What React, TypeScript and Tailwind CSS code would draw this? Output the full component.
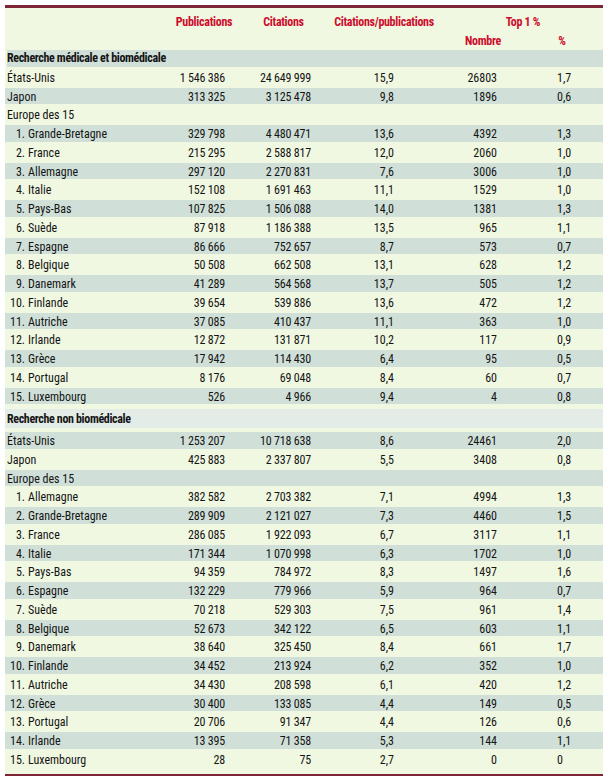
type Row = {
  label: string;
  rank?: number;
  pubs?: string;
  cits?: string;
  ratio?: string;
  count?: string;
  pct?: string;
};

const FONT = "font-['Roboto_Condensed','Open_Sans','DejaVu_Sans_Condensed',sans-serif] font-stretch-[75%]";
const COLS = 'grid grid-cols-[170px_58px_101px_100px_98px_60px]';

const MEDICAL: Row[] = [
  { label: 'États-Unis', pubs: '1 546 386', cits: '24 649 999', ratio: '15,9', count: '26803', pct: '1,7' },
  { label: 'Japon', pubs: '313 325', cits: '3 125 478', ratio: '9,8', count: '1896', pct: '0,6' },
  { label: 'Europe des 15' },
  { rank: 1, label: 'Grande-Bretagne', pubs: '329 798', cits: '4 480 471', ratio: '13,6', count: '4392', pct: '1,3' },
  { rank: 2, label: 'France', pubs: '215 295', cits: '2 588 817', ratio: '12,0', count: '2060', pct: '1,0' },
  { rank: 3, label: 'Allemagne', pubs: '297 120', cits: '2 270 831', ratio: '7,6', count: '3006', pct: '1,0' },
  { rank: 4, label: 'Italie', pubs: '152 108', cits: '1 691 463', ratio: '11,1', count: '1529', pct: '1,0' },
  { rank: 5, label: 'Pays-Bas', pubs: '107 825', cits: '1 506 088', ratio: '14,0', count: '1381', pct: '1,3' },
  { rank: 6, label: 'Suède', pubs: '87 918', cits: '1 186 388', ratio: '13,5', count: '965', pct: '1,1' },
  { rank: 7, label: 'Espagne', pubs: '86 666', cits: '752 657', ratio: '8,7', count: '573', pct: '0,7' },
  { rank: 8, label: 'Belgique', pubs: '50 508', cits: '662 508', ratio: '13,1', count: '628', pct: '1,2' },
  { rank: 9, label: 'Danemark', pubs: '41 289', cits: '564 568', ratio: '13,7', count: '505', pct: '1,2' },
  { rank: 10, label: 'Finlande', pubs: '39 654', cits: '539 886', ratio: '13,6', count: '472', pct: '1,2' },
  { rank: 11, label: 'Autriche', pubs: '37 085', cits: '410 437', ratio: '11,1', count: '363', pct: '1,0' },
  { rank: 12, label: 'Irlande', pubs: '12 872', cits: '131 871', ratio: '10,2', count: '117', pct: '0,9' },
  { rank: 13, label: 'Grèce', pubs: '17 942', cits: '114 430', ratio: '6,4', count: '95', pct: '0,5' },
  { rank: 14, label: 'Portugal', pubs: '8 176', cits: '69 048', ratio: '8,4', count: '60', pct: '0,7' },
  { rank: 15, label: 'Luxembourg', pubs: '526', cits: '4 966', ratio: '9,4', count: '4', pct: '0,8' },
];

const OTHER: Row[] = [
  { label: 'États-Unis', pubs: '1 253 207', cits: '10 718 638', ratio: '8,6', count: '24461', pct: '2,0' },
  { label: 'Japon', pubs: '425 883', cits: '2 337 807', ratio: '5,5', count: '3408', pct: '0,8' },
  { label: 'Europe des 15' },
  { rank: 1, label: 'Allemagne', pubs: '382 582', cits: '2 703 382', ratio: '7,1', count: '4994', pct: '1,3' },
  { rank: 2, label: 'Grande-Bretagne', pubs: '289 909', cits: '2 121 027', ratio: '7,3', count: '4460', pct: '1,5' },
  { rank: 3, label: 'France', pubs: '286 085', cits: '1 922 093', ratio: '6,7', count: '3117', pct: '1,1' },
  { rank: 4, label: 'Italie', pubs: '171 344', cits: '1 070 998', ratio: '6,3', count: '1702', pct: '1,0' },
  { rank: 5, label: 'Pays-Bas', pubs: '94 359', cits: '784 972', ratio: '8,3', count: '1497', pct: '1,6' },
  { rank: 6, label: 'Espagne', pubs: '132 229', cits: '779 966', ratio: '5,9', count: '964', pct: '0,7' },
  { rank: 7, label: 'Suède', pubs: '70 218', cits: '529 303', ratio: '7,5', count: '961', pct: '1,4' },
  { rank: 8, label: 'Belgique', pubs: '52 673', cits: '342 122', ratio: '6,5', count: '603', pct: '1,1' },
  { rank: 9, label: 'Danemark', pubs: '38 640', cits: '325 450', ratio: '8,4', count: '661', pct: '1,7' },
  { rank: 10, label: 'Finlande', pubs: '34 452', cits: '213 924', ratio: '6,2', count: '352', pct: '1,0' },
  { rank: 11, label: 'Autriche', pubs: '34 430', cits: '208 598', ratio: '6,1', count: '420', pct: '1,2' },
  { rank: 12, label: 'Grèce', pubs: '30 400', cits: '133 085', ratio: '4,4', count: '149', pct: '0,5' },
  { rank: 13, label: 'Portugal', pubs: '20 706', cits: '91 347', ratio: '4,4', count: '126', pct: '0,6' },
  { rank: 14, label: 'Irlande', pubs: '13 395', cits: '71 358', ratio: '5,3', count: '144', pct: '1,1' },
  { rank: 15, label: 'Luxembourg', pubs: '28', cits: '75', ratio: '2,7', count: '0', pct: '0' },
];

function DataRow({ row, shaded }: { row: Row; shaded: boolean }) {
  return (
    <div
      className={`${COLS} h-[18.75px] items-center whitespace-nowrap py-px bg-clip-content ${shaded ? 'bg-[#d0e0d8]' : ''}`}
    >
      <div className="flex pl-[2px]">
        {row.rank ? (
          <>
            <span className="inline-block w-[18px] text-right">{row.rank}.</span>
            <span className="ml-[3px]">{row.label}</span>
          </>
        ) : (
          <span>{row.label}</span>
        )}
      </div>
      <div className="pr-[8px] text-right tracking-[-0.2px]">{row.pubs}</div>
      <div className="pr-[23px] text-right tracking-[-0.2px]">{row.cits}</div>
      <div className="pr-[40px] text-right">{row.ratio}</div>
      <div className="pr-[35px] text-right">{row.count}</div>
      <div className="pl-[25px]">{row.pct}</div>
    </div>
  );
}

export default function App() {
  return (
    <div className={`pl-[5px] pt-[5px] ${FONT} text-[12px] text-[#141414]`}>
      <div className="w-[598px] border-t-[3px] border-b-[2px] border-[#7b2536] bg-[#f0f8e2]">
        <div className="flex h-[41px] flex-col whitespace-nowrap font-bold leading-[12px] tracking-[-0.3px] text-[#cc0c2c]">
          <div className={`${COLS} h-[27px] items-center text-center`}>
            <div />
            <div>Publications</div>
            <div>Citations</div>
            <div>Citations/publications</div>
            <div className="col-span-2 pl-[20px]">Top 1 %</div>
          </div>
          <div className={`${COLS} h-[10px] items-center text-center`}>
            <div className="col-span-4" />
            <div>Nombre</div>
            <div>%</div>
          </div>
        </div>

        <div className="flex h-[18.75px] items-center py-px bg-clip-content bg-[#d0e0d8] pl-[2px] font-bold tracking-[-0.35px]">
          Recherche médicale et biomédicale
        </div>
        {MEDICAL.map((row, i) => (
          <DataRow key={`m${i}`} row={row} shaded={i % 2 === 1} />
        ))}

        <div className="mt-[3.75px] flex h-[19px] items-center bg-[#e4ece8] pl-[2px] font-bold tracking-[-0.35px]">
          Recherche non biomédicale
        </div>
        <div className="mt-[3px] pb-[5.5px]">
          {OTHER.map((row, i) => (
            <DataRow key={`o${i}`} row={row} shaded={i % 2 === 0} />
          ))}
        </div>
      </div>
    </div>
  );
}
